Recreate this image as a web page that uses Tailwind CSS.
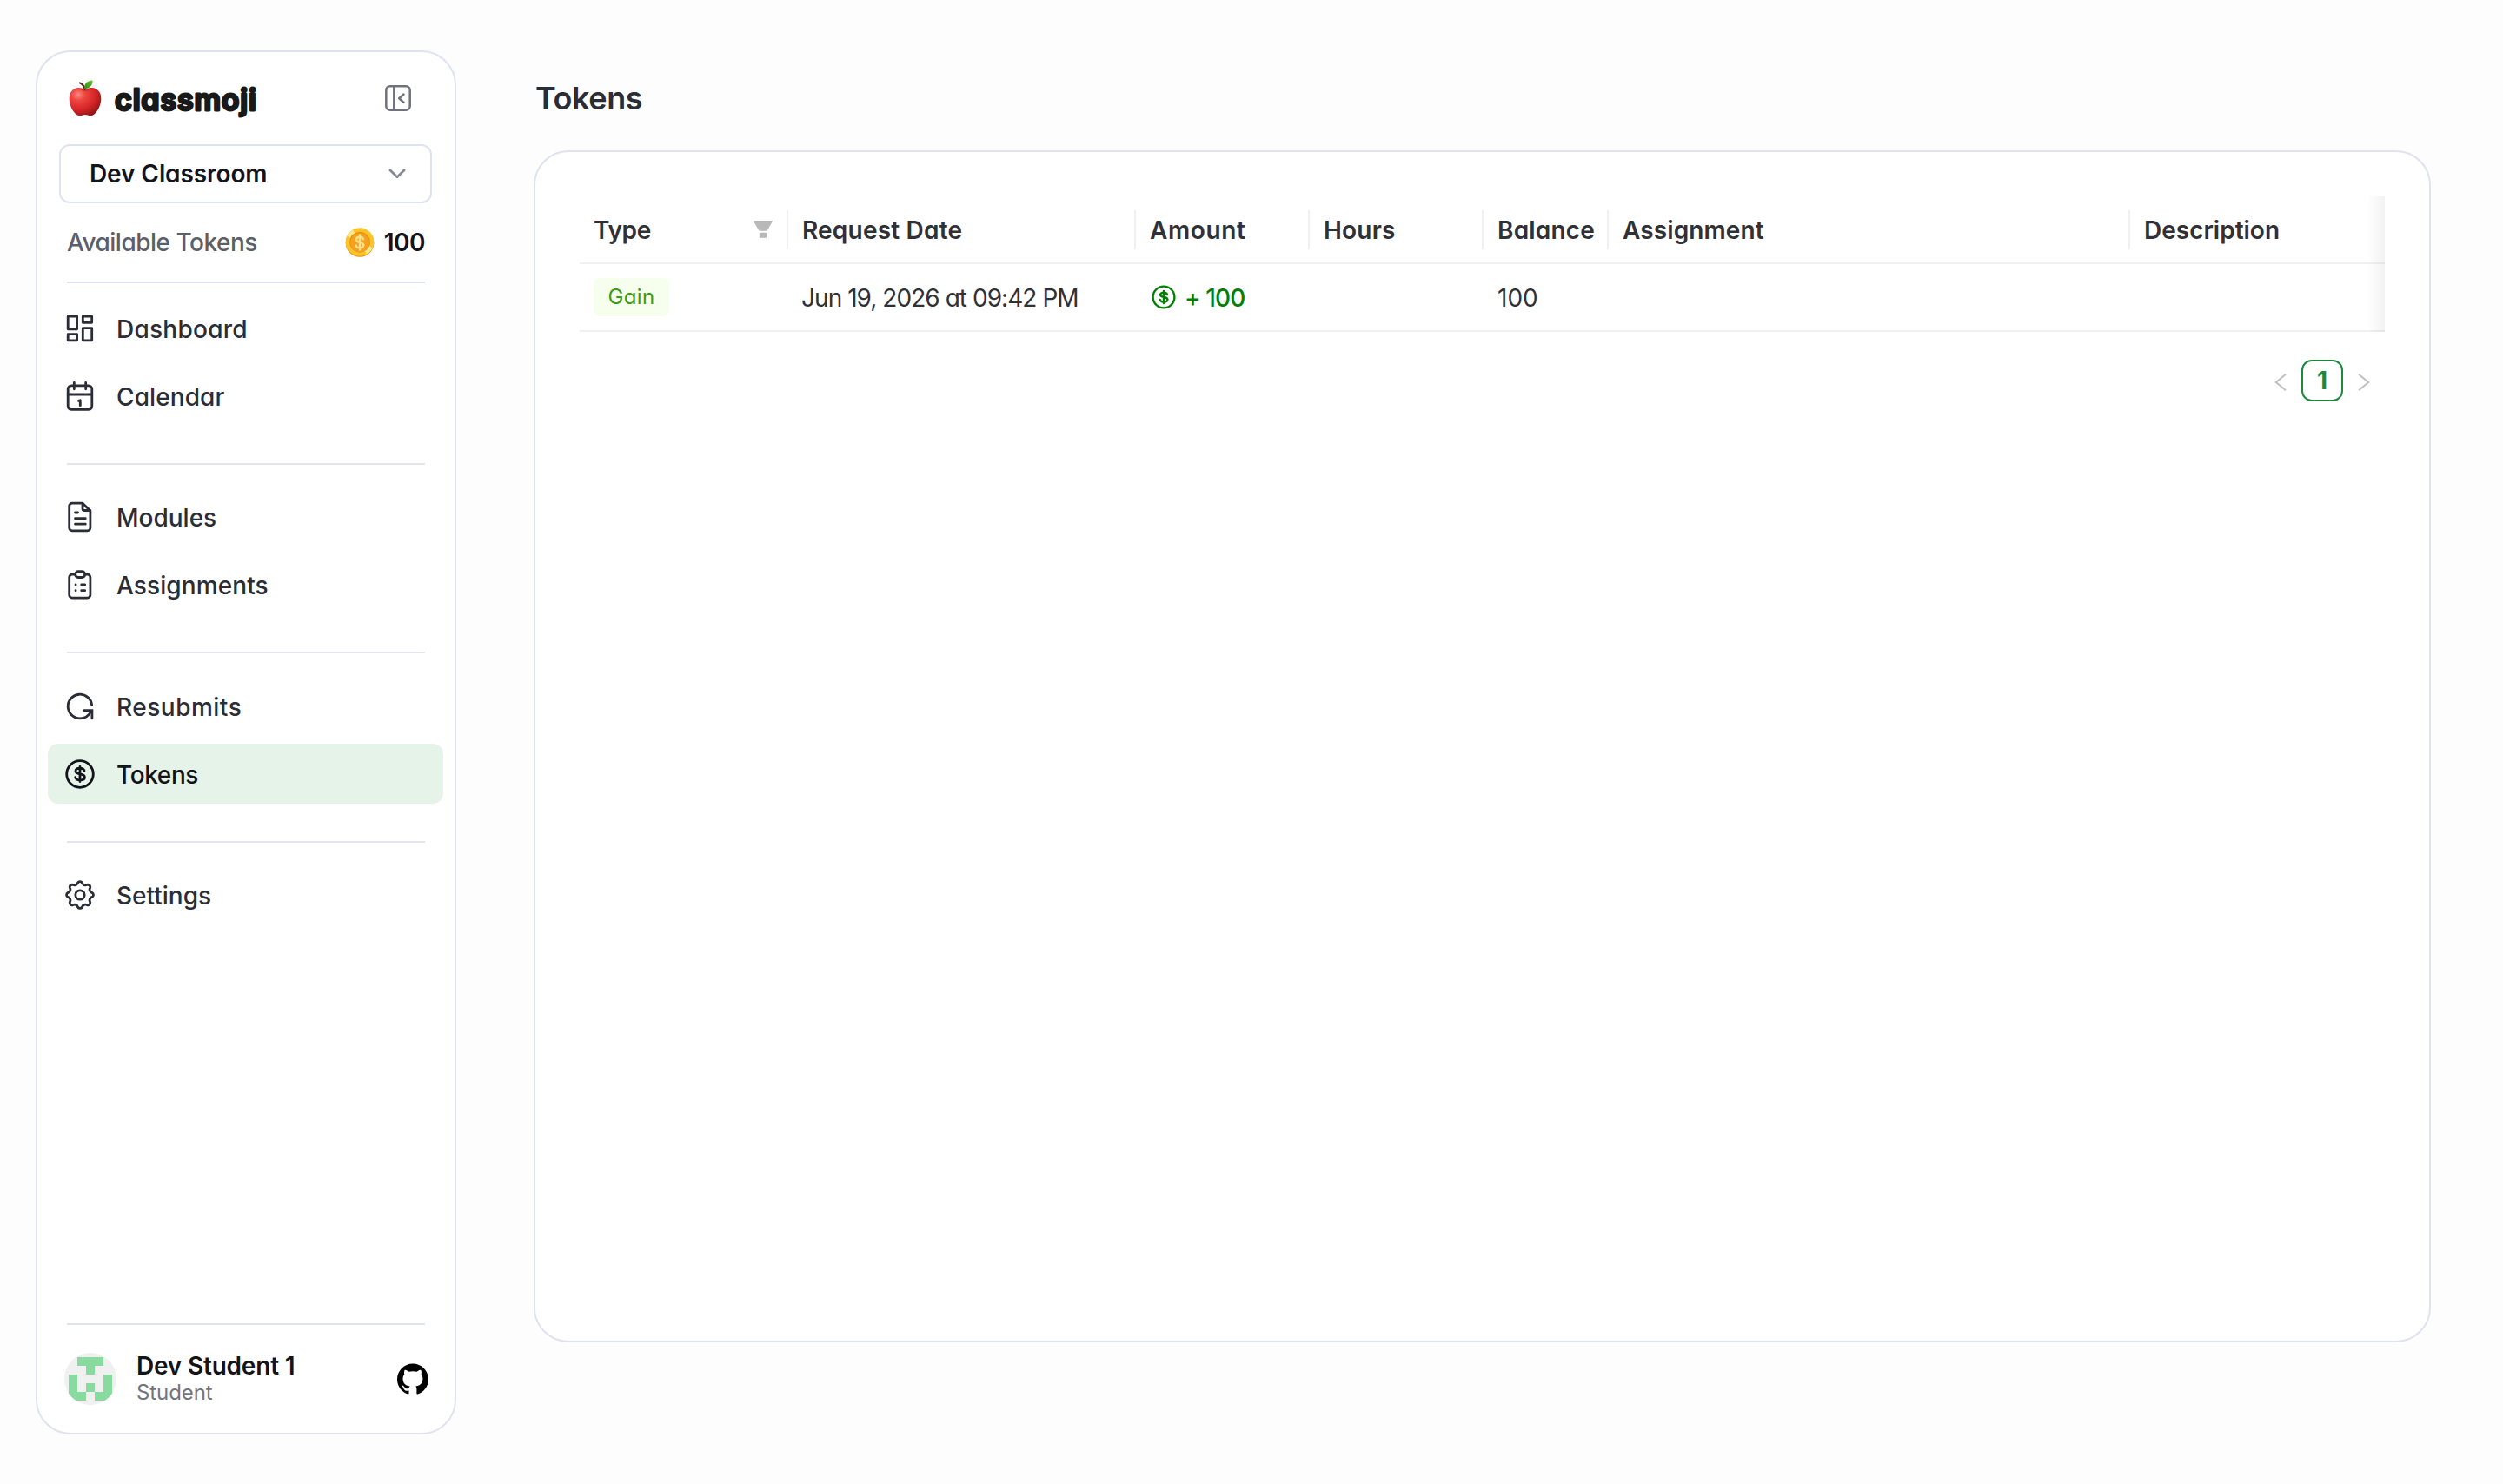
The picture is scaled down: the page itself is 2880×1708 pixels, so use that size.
<!DOCTYPE html>
<html lang="en">
<head>
    <meta charset="UTF-8" />
    <meta name="viewport" content="width=device-width, initial-scale=1.0" />
    <title>Tokens</title>
    <script src="https://cdn.jsdelivr.net/npm/@tailwindcss/browser@4"></script>
</head>

<body class="bg-[#fdfdfd] font-['Inter',sans-serif] text-[28px] leading-9 [font-feature-settings:'cv11']">
    <div class="flex w-[2880px] h-[1708px] pl-[41px] pr-[83px] pt-[58px]">
        <!-- Sidebar -->
        <aside class="flex flex-col shrink-0 w-[484px] h-[1593px] bg-white border-2 border-[#dfe3f0] rounded-[40px]">
            <div class="flex items-center h-[106px] pl-[36px] pr-[50px]">
                <svg class="w-[38px] h-[42px]" viewBox="0 0 38 42">
                    <defs>
                        <radialGradient id="apple" cx="0.28" cy="0.25" r="0.85">
                            <stop offset="0" stop-color="#fb8b80" />
                            <stop offset="0.25" stop-color="#ee4640" />
                            <stop offset="0.65" stop-color="#d42427" />
                            <stop offset="1" stop-color="#8d1313" />
                        </radialGradient>
                        <linearGradient id="leaf" x1="0" y1="1" x2="1" y2="0">
                            <stop offset="0" stop-color="#2f8a12" />
                            <stop offset="1" stop-color="#67c52b" />
                        </linearGradient>
                    </defs>
                    <path d="M19 11.5c2-2 5-2.900 8.500-2.400C34 10 37.500 15 37.300 22c-.2 7-3.500 13.500-7.300 17-3 2.700-6 2.300-8 1.500-2-.8-4-.8-6 0-2 .8-5 1.200-8-1.500C4 35.500.9 29 .7 22 .5 15 4 10 10.500 9.100c3.500-.5 6.500.4 8.500 2.400z" fill="url(#apple)" />
                    <path d="M13 10c2.500 2.200 9.500 2.200 12 0-2.500 3.500-9.500 3.500-12 0z" fill="#a51a1a" opacity=".6" />
                    <path d="M13 3.500c3 1.200 4.800 3.700 5.700 7.500" fill="none" stroke="#5a2a1c" stroke-width="2.200" stroke-linecap="round" />
                    <path d="M18 10.500C17.500 5 21 1 27.500.6 28 6 24 10 18 10.500z" fill="url(#leaf)" />
                </svg>
                <svg class="w-[172px] h-[50px] ml-[13px]" viewBox="0 0 172 50">
                    <text x="2" y="38.500" textLength="163" font-family="Inter, sans-serif" font-size="34" font-weight="600" fill="#191919" stroke="#191919" stroke-width="2.800" stroke-linejoin="round">classmoji</text>
                </svg>
                <svg class="w-[30px] h-[30px] ml-auto" viewBox="0 0 30 30" fill="none" stroke="#6f727e" stroke-width="2.500" stroke-linecap="round" stroke-linejoin="round">
                    <rect x="1.300" y="1.300" width="27.400" height="27.400" rx="4.500" />
                    <path d="M10.300 1.300v27.400M21.500 10.500l-5.300 4.700 5.300 4.700" />
                </svg>
            </div>

            <div class="flex items-center justify-between shrink-0 h-[68px] ml-[25px] mr-[26px] pl-[33px] pr-[28px] border-2 border-[#dfe3f0] rounded-xl">
                <span class="font-semibold text-[#13141b] tracking-[-0.1px]">Dev Classroom</span>
                <svg class="w-5 h-3" viewBox="0 0 20 12" fill="none" stroke="#858894" stroke-width="2.600" stroke-linecap="round" stroke-linejoin="round">
                    <path d="M1.800 1.800L10 9.800l8.200-8" />
                </svg>
            </div>

            <div class="flex items-center h-[90px] mx-[34px]">
                <span class="font-[450] text-[#5b5f6b] tracking-[-0.5px]">Available Tokens</span>
                <svg class="w-[34px] h-[34px] ml-auto mr-[11px]" viewBox="0 0 34 34">
                    <circle cx="17" cy="17.500" r="16.300" fill="#ee8a0c" />
                    <circle cx="17" cy="16.500" r="16.300" fill="#fbc52a" />
                    <path d="M2.500 9.500A16 16 0 0 1 9 2.500l2.500 4A12 12 0 0 0 6 12zM31.500 23.500a16 16 0 0 1-6.500 7l-2.500-4A12 12 0 0 0 28 21z" fill="#fde88a" />
                    <circle cx="17" cy="16.700" r="11.800" fill="#e98a0d" />
                    <circle cx="17" cy="17.200" r="11" fill="#f5a01f" />
                    <path d="M21 13.300c-.5-1.700-2-2.500-4-2.500-2.300 0-4 1-4 2.900 0 4.300 8.200 2.200 8.200 6.300 0 2-1.700 3.200-4.200 3.200-2.200 0-3.900-.9-4.300-2.800M17 8.500v17" fill="none" stroke="#fde08a" stroke-width="2.400" stroke-linecap="round" />
                </svg>
                <span class="font-semibold text-[#13141b] tracking-[-0.5px]">100</span>
            </div>
            <div class="shrink-0 h-0.5 mx-[34px] bg-[#dfe3f0]"></div>

            <nav class="flex flex-col ml-3 mr-[13px] mt-[17px] font-[450] text-[#2b2d36]">
                <a class="flex items-center gap-6 h-[69px] pl-[19px]">
                    <svg class="w-9 h-[37px]" viewBox="0 0 36 37" fill="none" stroke="currentColor" stroke-width="2.800" stroke-linejoin="round">
                        <rect x="4.200" y="5.200" width="10.400" height="14.600" />
                        <rect x="21.300" y="5.200" width="10.400" height="7.100" />
                        <rect x="4.200" y="25.700" width="10.400" height="7.100" />
                        <rect x="21.300" y="18.700" width="10.400" height="14.100" />
                    </svg>
                    <span class="pt-0.5 tracking-[0.25px]">Dashboard</span>
                </a>
                <a class="flex items-center gap-6 h-[69px] mt-[9px] pl-[19px]">
                    <svg class="w-9 h-[37px]" viewBox="0 0 36 37" fill="none" stroke="currentColor" stroke-width="2.800" stroke-linecap="round" stroke-linejoin="round">
                        <rect x="4.200" y="6.800" width="27.600" height="27.600" rx="4" />
                        <path d="M4.200 17h27.600M11.300 3.500v7.300M24.700 3.500v7.300M16.400 24.400l1.900-.6v5.900" />
                    </svg>
                    <span class="pt-0.5 tracking-[0.1px]">Calendar</span>
                </a>

                <div class="h-0.5 ml-[22px] mr-[21px] mt-[43px] bg-[#e4e5ec]"></div>

                <a class="flex items-center gap-6 h-[69px] mt-[25px] pl-[19px]">
                    <svg class="w-9 h-[37px]" viewBox="0 0 36 37" fill="none" stroke="currentColor" stroke-width="2.800" stroke-linecap="round" stroke-linejoin="round">
                        <path d="M9 3.200h12l8.900 8.600v19.700a3.300 3.300 0 0 1-3.300 3.300H9a3.300 3.300 0 0 1-3.300-3.300v-25A3.300 3.300 0 0 1 9 3.200z" />
                        <path d="M21 3.500v6a2 2 0 0 0 2 2h6.500M12.500 14h3M12.500 20.700h11.800M12.500 27.200h11.800" />
                    </svg>
                    <span class="pt-0.5">Modules</span>
                </a>
                <a class="flex items-center gap-6 h-[69px] mt-[9px] pl-[19px]">
                    <svg class="w-9 h-[37px]" viewBox="0 0 36 37" fill="none" stroke="currentColor" stroke-width="2.800" stroke-linecap="round" stroke-linejoin="round">
                        <path d="M12.500 7.200H9a3.300 3.300 0 0 0-3.300 3.300v20.300A3.300 3.300 0 0 0 9 34.100h17.600a3.300 3.300 0 0 0 3.300-3.300V10.500a3.300 3.300 0 0 0-3.300-3.300H24" />
                        <rect x="12.700" y="3.700" width="11" height="6.800" rx="3.200" />
                        <path d="M13 19h.1M13 25.700h.1M19.700 19h4M19.700 25.700h4" />
                    </svg>
                    <span class="pt-0.5 tracking-[0.1px]">Assignments</span>
                </a>

                <div class="h-0.5 ml-[22px] mr-[21px] mt-[43px] bg-[#e4e5ec]"></div>

                <a class="flex items-center gap-6 h-[69px] mt-[26px] pl-[19px]">
                    <svg class="w-9 h-[37px]" viewBox="0 0 36 37" fill="none" stroke="currentColor" stroke-width="2.800" stroke-linecap="round">
                        <path d="M31.700 17.500A13.800 13.800 0 1 0 18 32.800c5.300 0 10-2.800 12.800-8" />
                        <path d="M22.800 23.700h9.100v9.200" />
                    </svg>
                    <span class="pt-0.5 tracking-[0.5px]">Resubmits</span>
                </a>
                <a class="flex items-center gap-6 h-[69px] mt-[9px] pl-[19px] bg-[#e6f3e8] text-[#13141b] rounded-xl">
                    <svg class="w-9 h-[37px]" viewBox="0 0 36 37" fill="none" stroke="currentColor" stroke-width="2.800" stroke-linecap="round">
                        <circle cx="18" cy="19" r="15.300" />
                        <path d="M23 15.200c-.6-2-2.400-3-5-3-3 0-5 1.200-5 3.300 0 5 10.400 1.800 10.400 6.900 0 2.200-2.200 3.500-5.400 3.500-2.800 0-4.800-1.100-5.300-3.200M18 10.500v17" />
                    </svg>
                    <span class="pt-0.5 tracking-[-0.4px]">Tokens</span>
                </a>

                <div class="h-0.5 ml-[22px] mr-[21px] mt-[43px] bg-[#e4e5ec]"></div>

                <a class="flex items-center gap-6 h-[69px] mt-[25px] pl-[19px]">
                    <svg class="w-9 h-[37px]" viewBox="0 0 36 37" fill="none" stroke="currentColor" stroke-width="2.800" stroke-linejoin="round">
                        <g transform="translate(18 19)">
                            <circle r="5.200" />
                            <path d="M-2.470-13.980A2.800 2.800 0 0 1 2.470-13.980A3.800 3.800 0 0 0 8.140-11.630A2.800 2.800 0 0 1 11.630-8.140A3.800 3.800 0 0 0 13.980-2.470A2.800 2.800 0 0 1 13.980 2.470A3.800 3.800 0 0 0 11.630 8.140A2.800 2.800 0 0 1 8.140 11.630A3.800 3.800 0 0 0 2.470 13.980A2.800 2.800 0 0 1-2.470 13.980A3.800 3.800 0 0 0-8.140 11.630A2.800 2.800 0 0 1-11.630 8.140A3.800 3.800 0 0 0-13.980 2.470A2.800 2.800 0 0 1-13.980-2.470A3.800 3.800 0 0 0-11.630-8.140A2.800 2.800 0 0 1-8.140-11.630A3.800 3.800 0 0 0-2.470-13.980z" />
                        </g>
                    </svg>
                    <span class="pt-0.5">Settings</span>
                </a>
            </nav>

            <!-- Signed-in user -->
            <div class="mt-auto mx-[34px] h-0.5 bg-[#dfe3f0]"></div>
            <div class="flex items-center h-[124px] pl-[31px] pr-[30px]">
                <svg class="w-[60px] h-[60px] rounded-full bg-[#f0f0f0]" viewBox="0 0 60 60" fill="#89da9f" shape-rendering="crispEdges">
                    <path d="M15 5h30v10H35v10H25V15H15zM5 25h10v20h10v10H5zM45 25h10v30H35V45h10zM25 35h10v10H25z" />
                </svg>
                <div class="flex flex-col ml-[23px]">
                    <span class="font-semibold leading-[31px] text-[#13141b] tracking-[-0.2px]">Dev Student 1</span>
                    <span class="text-2xl leading-[30px] text-[#72747f] tracking-[-0.1px]">Student</span>
                </div>
                <svg class="w-9 h-9 ml-auto" viewBox="0 0 24 24" fill="#000">
                    <path d="M12 .297c-6.630 0-12 5.373-12 12 0 5.303 3.438 9.800 8.205 11.385.6.113.82-.258.82-.577 0-.285-.01-1.040-.015-2.040-3.338.724-4.042-1.610-4.042-1.610C4.422 18.070 3.633 17.700 3.633 17.700c-1.087-.744.084-.729.084-.729 1.205.084 1.838 1.236 1.838 1.236 1.070 1.835 2.809 1.305 3.495.998.108-.776.417-1.305.76-1.605-2.665-.3-5.466-1.332-5.466-5.930 0-1.310.465-2.380 1.235-3.220-.135-.303-.54-1.523.105-3.176 0 0 1.005-.322 3.300 1.230.96-.267 1.980-.399 3-.405 1.020.006 2.040.138 3 .405 2.280-1.552 3.285-1.230 3.285-1.230.645 1.653.24 2.873.12 3.176.765.84 1.230 1.910 1.230 3.220 0 4.610-2.805 5.625-5.475 5.920.42.36.81 1.096.81 2.220 0 1.606-.015 2.896-.015 3.286 0 .315.21.69.825.57C20.565 22.092 24 17.592 24 12.297c0-6.627-5.373-12-12-12" />
                </svg>
            </div>
        </aside>

        <!-- Content -->
        <main class="flex flex-col flex-1 ml-[89px]">
            <h1 class="h-[115px] leading-[110px] pl-0.5 text-4xl font-semibold text-[#2b2d36] tracking-[-0.4px]">Tokens</h1>

            <section class="h-[1372px] p-[51px] bg-white border-2 border-[#dfe3f0] rounded-[40px]">
                <div class="relative w-[2077px]">
                    <table class="w-full table-fixed border-collapse text-left text-[#303137]">
                        <colgroup>
                            <col class="w-[240px]" />
                            <col class="w-[400px]" />
                            <col class="w-[200px]" />
                            <col class="w-[200px]" />
                            <col class="w-[144px]" />
                            <col class="w-[600px]" />
                            <col />
                        </colgroup>
                        <thead>
                            <tr class="h-[77px] border-b-2 border-[#f0f0f0]">
                                <th class="p-0 font-semibold">
                                    <div class="flex items-center justify-between h-[45px] px-4 border-r-2 border-[#f0f0f0]">
                                        <span class="pt-0.5 tracking-[-0.3px]">Type</span>
                                        <svg class="w-[22px] h-5" viewBox="0 0 22 20" fill="#b9b9bb">
                                            <path d="M.9 0h20.200c.7 0 1 .6.700 1.100L15.500 11.700h-9L.2 1.100C-.1.6.2 0 .9 0zM6.800 13.700h8.400v5.300c0 .4-.3.700-.7.700h-7a.7.7 0 0 1-.7-.7z" />
                                        </svg>
                                    </div>
                                </th>
                                <th class="p-0 font-semibold"><div class="h-[45px] leading-[47px] pl-4 border-r-2 border-[#f0f0f0] tracking-[0.2px]">Request Date</div></th>
                                <th class="p-0 font-semibold"><div class="h-[45px] leading-[47px] pl-4 border-r-2 border-[#f0f0f0] tracking-[0.6px]">Amount</div></th>
                                <th class="p-0 font-semibold"><div class="h-[45px] leading-[47px] pl-4 border-r-2 border-[#f0f0f0] tracking-[0.2px]">Hours</div></th>
                                <th class="p-0 font-semibold"><div class="h-[45px] leading-[47px] pl-4 border-r-2 border-[#f0f0f0] tracking-[0.2px]">Balance</div></th>
                                <th class="p-0 font-semibold"><div class="h-[45px] leading-[47px] pl-4 border-r-2 border-[#f0f0f0] tracking-[0.1px]">Assignment</div></th>
                                <th class="p-0 font-semibold"><div class="h-[45px] leading-[47px] pl-4">Description</div></th>
                            </tr>
                        </thead>
                        <tbody>
                            <tr class="h-[78px] border-b-2 border-[#f0f0f0]">
                                <td class="p-0 pl-4">
                                    <div class="flex items-center justify-center w-[87px] h-11 rounded-lg bg-[#f6ffed] text-2xl text-[#389e0d] tracking-[0.4px]">Gain</div>
                                </td>
                                <td class="p-0 pl-[15px] pt-0.5 tracking-[-0.95px]">Jun 19, 2026 at 09:42 PM</td>
                                <td class="p-0 pl-[18px]">
                                    <div class="flex items-center text-[#008000]">
                                        <svg class="w-[28px] h-[28px]" viewBox="0 0 28 28" fill="none" stroke="currentColor" stroke-width="2.400" stroke-linecap="round">
                                            <circle cx="14" cy="14" r="12.400" />
                                            <path d="M18 11c-.5-1.500-2-2.300-4-2.300-2.300 0-4 1-4 2.600 0 4 8.400 1.500 8.400 5.500 0 1.700-1.800 2.700-4.400 2.700-2.200 0-3.900-.9-4.300-2.500M14 7v14" />
                                        </svg>
                                        <span class="ml-2.5 pt-0.5 font-[450] tracking-[-0.9px]">+ 100</span>
                                    </div>
                                </td>
                                <td></td>
                                <td class="p-0 pl-4 pt-0.5">100</td>
                                <td></td>
                                <td></td>
                            </tr>
                        </tbody>
                    </table>
                    <!-- scroll shadow over the table's right edge -->
                    <div class="absolute inset-y-0 right-0 w-5 bg-linear-to-r from-black/0 to-black/5"></div>
                </div>

                <div class="flex justify-end w-[2077px] mt-8">
                    <button class="flex items-center justify-center size-12">
                        <svg class="w-[14px] h-[22px] mt-1" viewBox="0 0 14 22" fill="none" stroke="#bfbfbf" stroke-width="2">
                            <path d="M13 1.800L1.800 11 13 20.200" />
                        </svg>
                    </button>
                    <button class="flex items-center justify-center size-12 border-2 border-[#1f883d] rounded-xl font-bold text-[#1f883d]">1</button>
                    <button class="flex items-center justify-center size-12">
                        <svg class="w-[14px] h-[22px] mt-1" viewBox="0 0 14 22" fill="none" stroke="#bfbfbf" stroke-width="2">
                            <path d="M1 1.800L12.200 11 1 20.200" />
                        </svg>
                    </button>
                </div>
            </section>
        </main>
    </div>
</body>
</html>
